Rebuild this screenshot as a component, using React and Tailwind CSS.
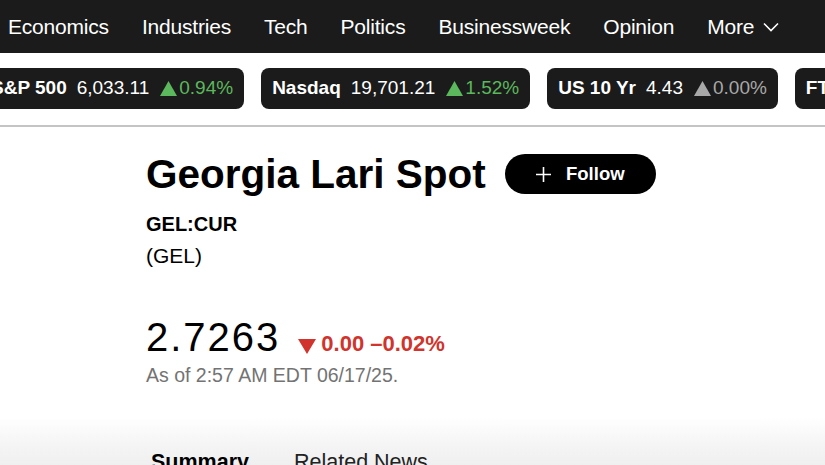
import React from "react";

const F = { fontFamily: '"Liberation Sans", Arial, sans-serif' };

function Tri({ up = true, color, w = 16, h = 14 }) {
  return (
    <svg width={w} height={h} viewBox="0 0 16 14" className="shrink-0">
      {up ? (
        <polygon points="8,0 16,14 0,14" fill={color} />
      ) : (
        <polygon points="0,0 16,0 8,14" fill={color} />
      )}
    </svg>
  );
}

function Pill({ label, value, pct, color, className = "" }) {
  return (
    <div
      className={`flex h-[41px] shrink-0 items-center whitespace-nowrap rounded-[8px] bg-[#1b1b1b] px-[11px] text-[19px] text-white ${className}`}
    >
      <span className="font-bold">{label}</span>
      <span className="ml-[10px]">{value}</span>
      {pct && (
        <span className="ml-[11px] flex items-center" style={{ color }}>
          <Tri color={color} w={17} h={15} />
          <span className="ml-[2px]">{pct}</span>
        </span>
      )}
    </div>
  );
}

export default function App() {
  const nav = ["Economics", "Industries", "Tech", "Politics", "Businessweek", "Opinion"];
  return (
    <div className="h-[465px] w-[825px] overflow-hidden bg-white" style={F}>
      {/* Top nav */}
      <div className="flex h-[53px] items-center gap-[33px] bg-[#1b1b1b] pl-[8px] text-[21px] tracking-[-0.2px] text-white whitespace-nowrap">
        {nav.map((n) => (
          <span key={n}>{n}</span>
        ))}
        <span className="flex items-center">
          More
          <svg width="16" height="10" viewBox="0 0 16 10" className="ml-[9px]">
            <path d="M1 1.5 L8 8.5 L15 1.5" stroke="white" strokeWidth="1.6" fill="none" />
          </svg>
        </span>
      </div>

      {/* Ticker strip */}
      <div className="flex gap-[17px] pt-[15px]">
        <Pill className="ml-[-20px]" label="S&P 500" value="6,033.11" pct="0.94%" color="#5cb85c" />
        <Pill label="Nasdaq" value="19,701.21" pct="1.52%" color="#5cb85c" />
        <Pill label="US 10 Yr" value="4.43" pct="0.00%" color="#a8a8a8" />
        <Pill label="FTSE 100" value="8,875.22" pct="0.59%" color="#5cb85c" />
      </div>

      <div className="mt-[16px] h-[2px] bg-[#c4c4c4]" />

      {/* Content */}
      <div className="pl-[146px]">
        <div className="mt-[27px] flex items-center">
          <h1 className="text-[40.5px] font-bold leading-[40px] text-black whitespace-nowrap">
            Georgia Lari Spot
          </h1>
          <button className="ml-[19px] flex h-[40px] w-[151px] items-center justify-center rounded-full bg-black text-[18.5px] font-bold text-white">
            <svg width="15" height="15" viewBox="0 0 15 15" className="mr-[15px]">
              <path d="M7.5 0 V15 M0 7.5 H15" stroke="white" strokeWidth="1.6" />
            </svg>
            Follow
          </button>
        </div>

        <div className="mt-[14px] text-[20px] font-bold leading-[32px] text-black">GEL:CUR</div>
        <div className="text-[21px] leading-[32px] text-black">(GEL)</div>

        <div className="mt-[41px] flex items-baseline whitespace-nowrap">
          <span className="text-[40px] leading-[48px] tracking-[2px] text-black">2.7263</span>
          <span className="ml-[18px] flex items-baseline text-[22px] font-bold text-[#d0342c]">
            <svg width="18" height="15" viewBox="0 0 18 15" className="mr-[5px] self-center translate-y-[3px]">
              <polygon points="0,0 18,0 9,15" fill="#d0342c" />
            </svg>
            0.00 –0.02%
          </span>
        </div>
        <div className="mt-[2px] text-[19.5px] leading-[24px] text-[#737373]">As of 2:57 AM EDT 06/17/25.</div>
      </div>

      {/* Tabs bar */}
      <div className="mt-[30px] h-[60px] bg-gradient-to-b from-white via-[#f4f4f4] to-[#ededed] pl-[151px] pt-[31px]">
        <div className="flex gap-[45px] text-[21.5px] leading-[28px] text-black whitespace-nowrap">
          <span className="font-bold">Summary</span>
          <span className="text-[#222]">Related News</span>
        </div>
      </div>
    </div>
  );
}
